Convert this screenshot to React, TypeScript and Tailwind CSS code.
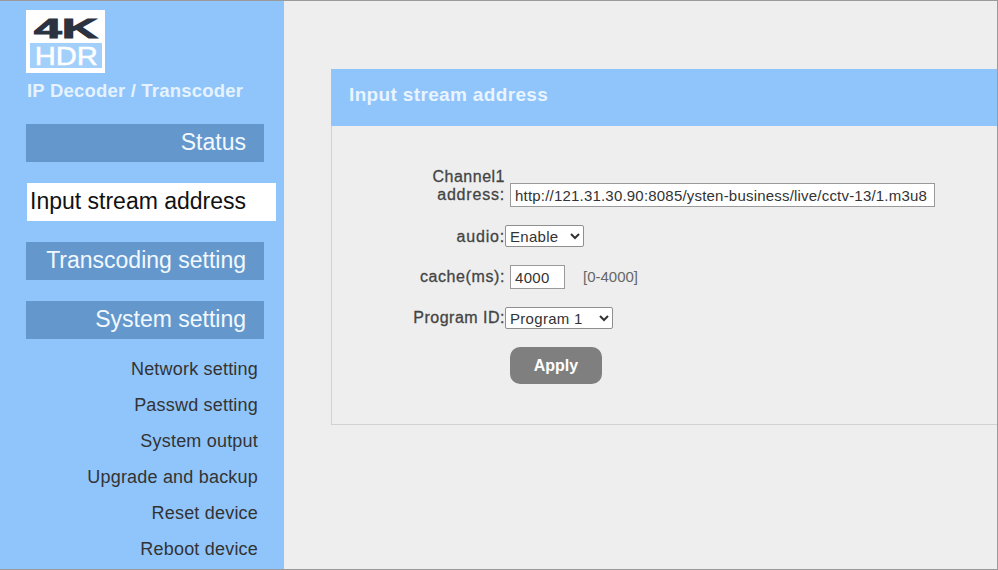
import React from 'react';

const subLinks = ['Network setting', 'Passwd setting', 'System output', 'Upgrade and backup', 'Reset device', 'Reboot device'];

const NavBar = ({ label }: { label: string }) => (
  <div className="w-[238px] h-[38px] ml-[26px] bg-[#6498cd] flex items-center justify-end pr-[18px] pb-[2px] text-[23px] text-[#f2f8fe]">
    {label}
  </div>
);

const Logo = () => (
  <div className="ml-[26px] w-[79px] h-[63px] bg-white flex flex-col items-center overflow-hidden">
    <div className="h-[33px] w-full flex items-center justify-center pt-[4px] pl-[1px] text-[#2b3240] text-[28px] font-bold leading-none">
      <span className="scale-x-[1.78] [-webkit-text-stroke:1px_#2b3240]">4K</span>
    </div>
    <div className="w-[72px] h-[25px] bg-[#a3d0fb] flex items-center justify-center">
      <span className="text-white text-[26px] leading-none pl-[2px] scale-x-[1.12] [-webkit-text-stroke:0.5px_#ffffff]">HDR</span>
    </div>
  </div>
);

const App: React.FC = () => {
  return (
    <div className="w-[998px] h-[570px] flex overflow-hidden bg-[#eeeeee] border-t border-r border-b border-[#9a9a9a] font-['Liberation_Sans',Arial,sans-serif]">
      {/* Sidebar */}
      <aside className="w-[284px] shrink-0 bg-[#90c5fb] pt-[9px]">
        <Logo />
        <p className="ml-[27px] mt-[8px] h-[20px] leading-[20px] text-[18.5px] font-bold tracking-[0.2px] text-[#e6f3fe] whitespace-nowrap">
          IP Decoder / Transcoder
        </p>
        <div className="mt-[23px] flex flex-col gap-[21px]">
          <NavBar label="Status" />
          <div className="w-[249px] h-[38px] ml-[27px] bg-white flex items-center pl-[3px] pb-[2px] text-[23px] text-[#111]">
            Input stream address
          </div>
          <NavBar label="Transcoding setting" />
          <NavBar label="System setting" />
        </div>
        <ul className="mt-[13px] pr-[26px] flex flex-col items-end text-[18px] tracking-[0.2px] text-[#333]">
          {subLinks.map((l) => (
            <li key={l} className="h-[36px] leading-[35px]">{l}</li>
          ))}
        </ul>
      </aside>

      {/* Main */}
      <main className="flex-1 pt-[68px] pl-[47px]">
        <section className="h-[356px] border-l border-b border-[#d2d2d2]">
          <h2 className="h-[57px] -ml-px bg-[#90c5fb] pl-[18px] pb-[4px] flex items-center text-[19px] font-bold tracking-[0.35px] text-[#e9f4fe]">
            Input stream address
          </h2>
          <form className="pt-[37px] text-[16px] text-[#444] tracking-[0.5px] [-webkit-text-stroke:0.3px_#444444]">
            <div className="flex items-end h-[44px]">
              <label className="w-[173px] text-right leading-[18px] pb-[3px]">
                <span className="block">Channel1</span>
                <span className="block tracking-[0.8px]">address:</span>
              </label>
              <input
                readOnly
                value="http://121.31.30.90:8085/ysten-business/live/cctv-13/1.m3u8"
                className="ml-[5px] w-[425px] h-[24px] px-[4px] bg-white border border-[#9a9a9a] text-[15px] tracking-[0.2px] text-[#333] [-webkit-text-stroke:0]"
              />
            </div>
            <div className="flex items-center h-[22px] mt-[18px]">
              <label className="w-[173px] text-right tracking-[0.8px] pt-[1px]">audio:</label>
              <select className="w-[79px] h-[22px] bg-white border border-[#8f8f8f] rounded-[2px] text-[15px] tracking-[0.3px] text-[#333] [-webkit-text-stroke:0]">
                <option>Enable</option>
              </select>
            </div>
            <div className="flex items-center h-[24px] mt-[18px]">
              <label className="w-[173px] text-right tracking-[0.6px]">cache(ms):</label>
              <input
                readOnly
                value="4000"
                className="ml-[5px] w-[55px] h-[24px] px-[4px] bg-white border border-[#9a9a9a] text-[15px] tracking-[0.3px] text-[#333] [-webkit-text-stroke:0]"
              />
              <span className="ml-[18px] text-[15px] tracking-[0] text-[#666] [-webkit-text-stroke:0]">[0-4000]</span>
            </div>
            <div className="flex items-center h-[22px] mt-[18px]">
              <label className="w-[173px] text-right">Program ID:</label>
              <select className="w-[108px] h-[22px] bg-white border border-[#8f8f8f] rounded-[2px] text-[15px] tracking-[0.3px] text-[#333] [-webkit-text-stroke:0]">
                <option>Program 1</option>
              </select>
            </div>
            <button
              type="button"
              className="block ml-[178px] mt-[18px] w-[92px] h-[37px] rounded-[10px] bg-[#7f7f7f] text-white text-[16px] font-bold tracking-[0] [-webkit-text-stroke:0]"
            >
              Apply
            </button>
          </form>
        </section>
      </main>
    </div>
  );
};

export default App;
